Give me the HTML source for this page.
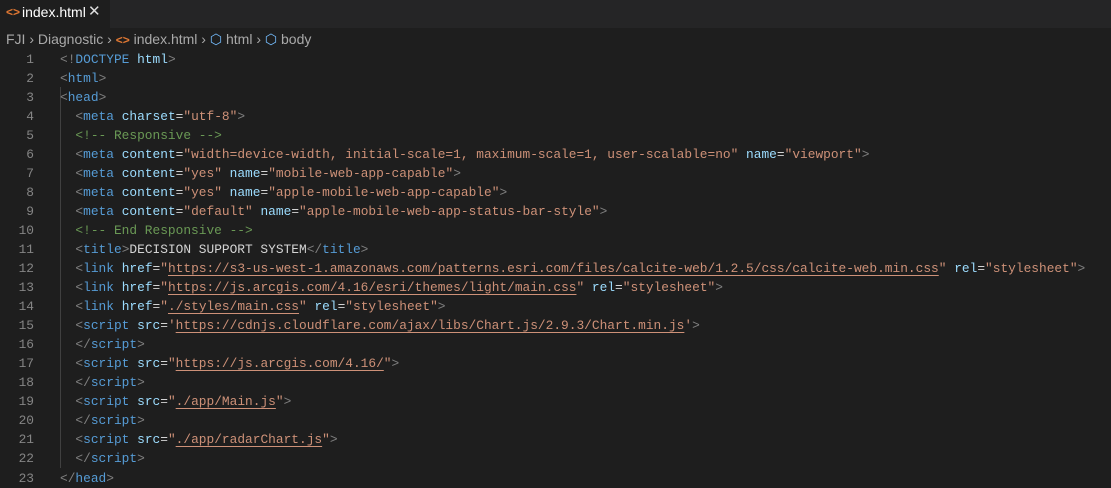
<!DOCTYPE html>
<html><head><style>
body{margin:0;width:1111px;height:485px;background:#1e1e1e;overflow:hidden;font-family:"Liberation Sans",sans-serif;}
.tabs{height:28px;background:#252526;position:relative}
.tab{position:absolute;left:0;top:0;width:110px;height:28px;background:#1e1e1e;color:#fff;font-size:14px;line-height:24px}
.tab .ic{position:absolute;left:6px;color:#e37933;font-size:12px;font-weight:bold}
.tab .t{position:absolute;left:22px}
.tab .x{position:absolute;left:88px;font-size:15px;color:#ddd}
.bc{position:absolute;top:30px;left:6px;font-size:14px;color:#a9a9a9;white-space:nowrap;line-height:18px}
.bc .o{color:#e37933;font-weight:bold;font-size:12px}
.bc .b{color:#75beff}
.code{position:absolute;top:49.5px;left:0;font-family:"Liberation Mono",monospace;font-size:12.85px}
.l{height:19.05px;line-height:19.05px;position:relative}
.n{position:absolute;left:0;width:34px;color:#858585;text-align:right}
.c{position:absolute;left:60px;color:#d4d4d4;white-space:pre}
.g{position:absolute;left:60px;top:87px;width:1px;height:381px;background:#404040}
.p{color:#808080}.t1{color:#569cd6}.a{color:#9cdcfe}.s{color:#ce9178}.m{color:#6a9955}
.u{text-decoration:underline;text-underline-offset:3px}
</style></head><body>
<div class="tabs"><div class="tab"><span class="ic">&lt;&gt;</span><span class="t">index.html</span><span class="x">✕</span></div></div>
<div class="bc">FJI &#8250; Diagnostic &#8250; <span class="o">&lt;&gt;</span> index.html &#8250; <span class="b">⬡</span> html &#8250; <span class="b">⬡</span> body</div>
<div class="g"></div>
<div class="code">
<div class="l"><span class="n">1</span><span class="c"><span class="p">&lt;!</span><span class="t1">DOCTYPE</span> <span class="a">html</span><span class="p">&gt;</span></span></div>
<div class="l"><span class="n">2</span><span class="c"><span class="p">&lt;</span><span class="t1">html</span><span class="p">&gt;</span></span></div>
<div class="l"><span class="n">3</span><span class="c"><span class="p">&lt;</span><span class="t1">head</span><span class="p">&gt;</span></span></div>
<div class="l"><span class="n">4</span><span class="c">  <span class="p">&lt;</span><span class="t1">meta</span> <span class="a">charset</span>=<span class="s">"utf-8"</span><span class="p">&gt;</span></span></div>
<div class="l"><span class="n">5</span><span class="c">  <span class="m">&lt;!-- Responsive --&gt;</span></span></div>
<div class="l"><span class="n">6</span><span class="c">  <span class="p">&lt;</span><span class="t1">meta</span> <span class="a">content</span>=<span class="s">"width=device-width, initial-scale=1, maximum-scale=1, user-scalable=no"</span> <span class="a">name</span>=<span class="s">"viewport"</span><span class="p">&gt;</span></span></div>
<div class="l"><span class="n">7</span><span class="c">  <span class="p">&lt;</span><span class="t1">meta</span> <span class="a">content</span>=<span class="s">"yes"</span> <span class="a">name</span>=<span class="s">"mobile-web-app-capable"</span><span class="p">&gt;</span></span></div>
<div class="l"><span class="n">8</span><span class="c">  <span class="p">&lt;</span><span class="t1">meta</span> <span class="a">content</span>=<span class="s">"yes"</span> <span class="a">name</span>=<span class="s">"apple-mobile-web-app-capable"</span><span class="p">&gt;</span></span></div>
<div class="l"><span class="n">9</span><span class="c">  <span class="p">&lt;</span><span class="t1">meta</span> <span class="a">content</span>=<span class="s">"default"</span> <span class="a">name</span>=<span class="s">"apple-mobile-web-app-status-bar-style"</span><span class="p">&gt;</span></span></div>
<div class="l"><span class="n">10</span><span class="c">  <span class="m">&lt;!-- End Responsive --&gt;</span></span></div>
<div class="l"><span class="n">11</span><span class="c">  <span class="p">&lt;</span><span class="t1">title</span><span class="p">&gt;</span>DECISION SUPPORT SYSTEM<span class="p">&lt;/</span><span class="t1">title</span><span class="p">&gt;</span></span></div>
<div class="l"><span class="n">12</span><span class="c">  <span class="p">&lt;</span><span class="t1">link</span> <span class="a">href</span>=<span class="s">"<span class="u">https://s3-us-west-1.amazonaws.com/patterns.esri.com/files/calcite-web/1.2.5/css/calcite-web.min.css</span>"</span> <span class="a">rel</span>=<span class="s">"stylesheet"</span><span class="p">&gt;</span></span></div>
<div class="l"><span class="n">13</span><span class="c">  <span class="p">&lt;</span><span class="t1">link</span> <span class="a">href</span>=<span class="s">"<span class="u">https://js.arcgis.com/4.16/esri/themes/light/main.css</span>"</span> <span class="a">rel</span>=<span class="s">"stylesheet"</span><span class="p">&gt;</span></span></div>
<div class="l"><span class="n">14</span><span class="c">  <span class="p">&lt;</span><span class="t1">link</span> <span class="a">href</span>=<span class="s">"<span class="u">./styles/main.css</span>"</span> <span class="a">rel</span>=<span class="s">"stylesheet"</span><span class="p">&gt;</span></span></div>
<div class="l"><span class="n">15</span><span class="c">  <span class="p">&lt;</span><span class="t1">script</span> <span class="a">src</span>=<span class="s">'<span class="u">https://cdnjs.cloudflare.com/ajax/libs/Chart.js/2.9.3/Chart.min.js</span>'</span><span class="p">&gt;</span></span></div>
<div class="l"><span class="n">16</span><span class="c">  <span class="p">&lt;/</span><span class="t1">script</span><span class="p">&gt;</span></span></div>
<div class="l"><span class="n">17</span><span class="c">  <span class="p">&lt;</span><span class="t1">script</span> <span class="a">src</span>=<span class="s">"<span class="u">https://js.arcgis.com/4.16/</span>"</span><span class="p">&gt;</span></span></div>
<div class="l"><span class="n">18</span><span class="c">  <span class="p">&lt;/</span><span class="t1">script</span><span class="p">&gt;</span></span></div>
<div class="l"><span class="n">19</span><span class="c">  <span class="p">&lt;</span><span class="t1">script</span> <span class="a">src</span>=<span class="s">"<span class="u">./app/Main.js</span>"</span><span class="p">&gt;</span></span></div>
<div class="l"><span class="n">20</span><span class="c">  <span class="p">&lt;/</span><span class="t1">script</span><span class="p">&gt;</span></span></div>
<div class="l"><span class="n">21</span><span class="c">  <span class="p">&lt;</span><span class="t1">script</span> <span class="a">src</span>=<span class="s">"<span class="u">./app/radarChart.js</span>"</span><span class="p">&gt;</span></span></div>
<div class="l"><span class="n">22</span><span class="c">  <span class="p">&lt;/</span><span class="t1">script</span><span class="p">&gt;</span></span></div>
<div class="l"><span class="n">23</span><span class="c"><span class="p">&lt;/</span><span class="t1">head</span><span class="p">&gt;</span></span></div>
</div>
</body></html>
